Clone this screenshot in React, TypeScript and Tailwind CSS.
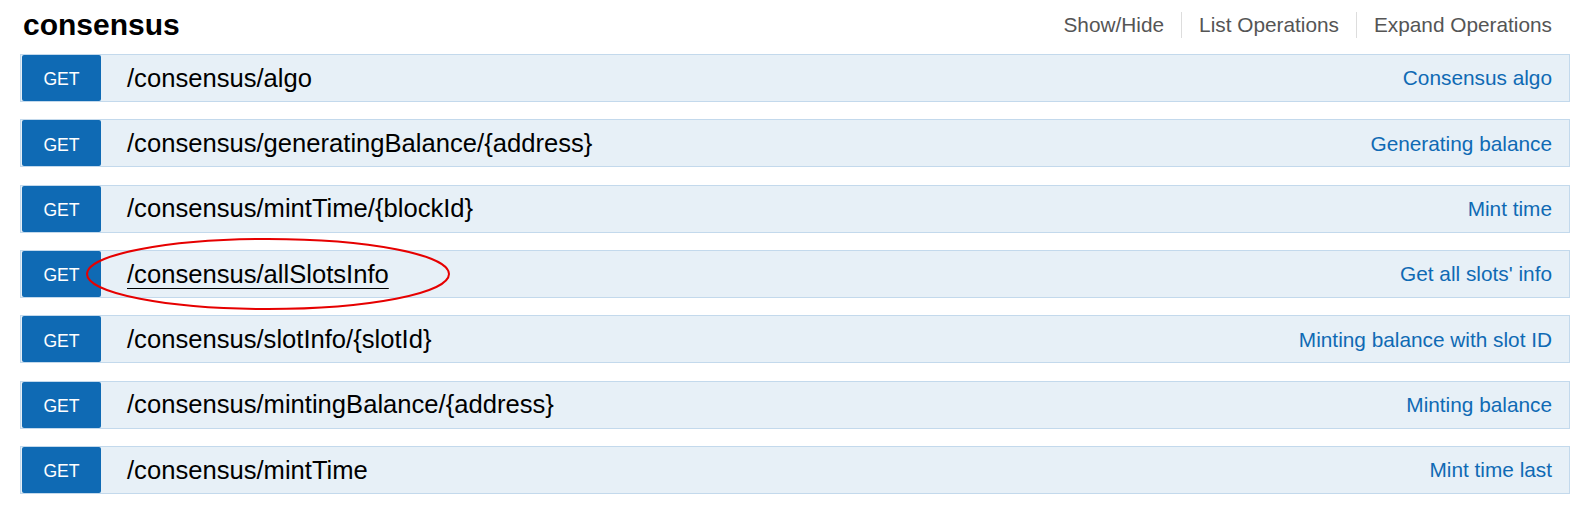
import React from "react";

interface Operation {
  path: string;
  summary: string;
  marked?: boolean;
}

const operations: Operation[] = [
  { path: "/consensus/algo", summary: "Consensus algo" },
  { path: "/consensus/generatingBalance/{address}", summary: "Generating balance" },
  { path: "/consensus/mintTime/{blockId}", summary: "Mint time" },
  { path: "/consensus/allSlotsInfo", summary: "Get all slots' info", marked: true },
  { path: "/consensus/slotInfo/{slotId}", summary: "Minting balance with slot ID" },
  { path: "/consensus/mintingBalance/{address}", summary: "Minting balance" },
  { path: "/consensus/mintTime", summary: "Mint time last" },
];

const App = () => {
  return (
    <div className="w-[1594px] h-[506px] bg-white pl-5 pr-6 font-['Liberation_Sans',Arial,sans-serif] overflow-hidden">
      {/* Resource header */}
      <div className="flex items-center justify-between h-[54px] pb-[5px]">
        <h2 className="ml-[3px] text-[30px] font-bold text-black leading-none">consensus</h2>
        <ul className="flex items-center text-[20.8px] text-[#555] pr-[18px] mt-[1px]">
          <li className="pr-[17px] border-r border-[#ddd] leading-[26px]">Show/Hide</li>
          <li className="px-[17px] border-r border-[#ddd] leading-[26px]">List Operations</li>
          <li className="pl-[17px] leading-[26px]">Expand Operations</li>
        </ul>
      </div>

      {/* Operations */}
      <div className="flex flex-col gap-[17.33px]">
        {operations.map((op, index) => (
          <div key={index} className="relative">
            <div className="flex items-center h-12 bg-[#e7f0f7] border border-[#c3d9ec]">
              <span className="ml-px w-[79px] h-full flex items-center justify-center pt-[3px] bg-[#0f6ab4] text-white text-[17.6px] rounded-[2px]">
                GET
              </span>
              <span
                className={
                  op.marked
                    ? "pl-[26px] text-[25.6px] text-black underline decoration-1 underline-offset-[5px]"
                    : "pl-[26px] text-[25.6px] text-black"
                }
              >
                {op.path}
              </span>
              <span className="ml-auto pr-[17px] text-[20.8px] text-[#0f6ab4]">{op.summary}</span>
            </div>
            {op.marked && (
              <svg
                className="absolute left-[66px] top-[-12px] pointer-events-none overflow-visible"
                width="364"
                height="72"
                viewBox="0 0 364 72"
              >
                <ellipse cx="182" cy="36" rx="181" ry="35" fill="none" stroke="#e60000" strokeWidth="2" />
              </svg>
            )}
          </div>
        ))}
      </div>
    </div>
  );
};

export default App;
